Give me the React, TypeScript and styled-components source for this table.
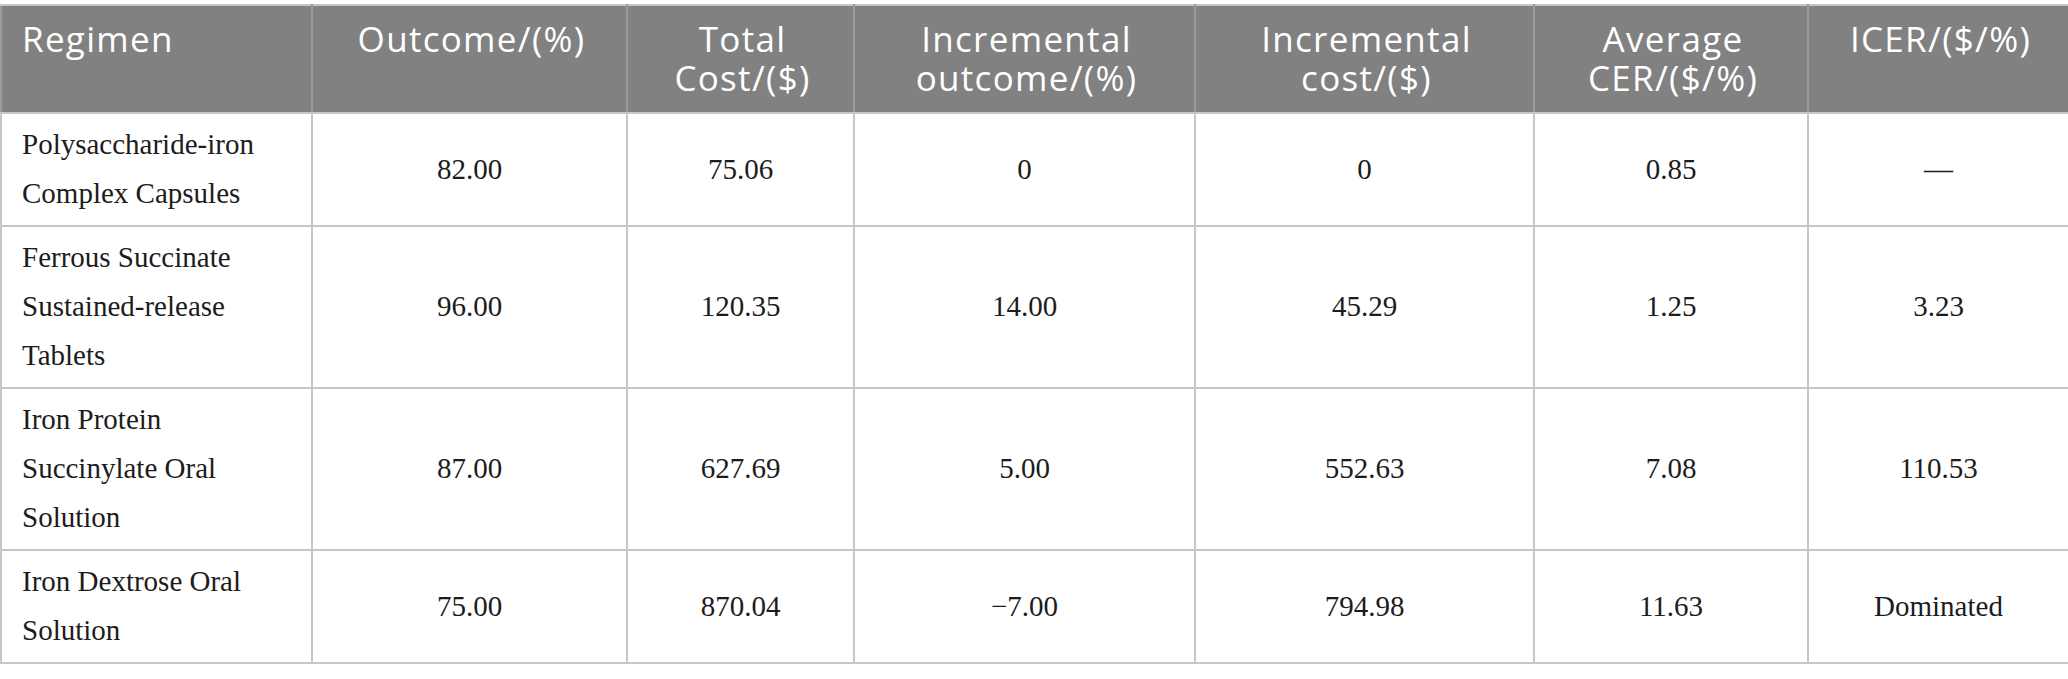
import React from "react";
import styled, { createGlobalStyle } from "styled-components";

const headerGray = "#808180";
const lineGray = "#c6c6c6";

const GlobalStyle = createGlobalStyle`
  html, body {
    margin: 0;
    padding: 0;
    background: #ffffff;
  }
`;

interface Row {
  regimen: string;
  values: string[];
}

const columns = [
  { label: "Regimen", width: 311 },
  { label: "Outcome/(%)", width: 315 },
  { label: "Total Cost/($)", width: 227 },
  { label: "Incremental outcome/(%)", width: 341 },
  { label: "Incremental cost/($)", width: 339 },
  { label: "Average CER/($/%)", width: 274 },
  { label: "ICER/($/%)", width: 261 },
];

const rows: Row[] = [
  {
    regimen: "Polysaccharide-iron Complex Capsules",
    values: ["82.00", "75.06", "0", "0", "0.85", "—"],
  },
  {
    regimen: "Ferrous Succinate Sustained-release Tablets",
    values: ["96.00", "120.35", "14.00", "45.29", "1.25", "3.23"],
  },
  {
    regimen: "Iron Protein Succinylate Oral Solution",
    values: ["87.00", "627.69", "5.00", "552.63", "7.08", "110.53"],
  },
  {
    regimen: "Iron Dextrose Oral Solution",
    values: ["75.00", "870.04", "−7.00", "794.98", "11.63", "Dominated"],
  },
];

export default function App() {
  return (
    <Page>
      <GlobalStyle />
      <Table>
        <colgroup>
          {columns.map((c) => (
            <col key={c.label} style={{ width: c.width }} />
          ))}
        </colgroup>
        <thead>
          <tr>
            {columns.map((c, i) => (
              <HeadCell key={c.label} $first={i === 0}>
                {c.label}
              </HeadCell>
            ))}
          </tr>
        </thead>
        <tbody>
          {rows.map((r) => (
            <tr key={r.regimen}>
              <BodyCell $first>{r.regimen}</BodyCell>
              {r.values.map((v, i) => (
                <BodyCell key={i}>{v}</BodyCell>
              ))}
            </tr>
          ))}
        </tbody>
      </Table>
    </Page>
  );
}

const Page = styled.div`
  padding: 4px 0 0;
  width: 2068px;
`;

const Table = styled.table`
  width: 2068px;
  table-layout: fixed;
  border-collapse: collapse;
  border: 2px solid ${lineGray};
`;

const HeadCell = styled.th<{ $first?: boolean }>`
  background: ${headerGray};
  color: #ffffff;
  font-family: "Open Sans", "DejaVu Sans", sans-serif;
  font-weight: 400;
  font-size: 35px;
  letter-spacing: 1.3px;
  line-height: 39px;
  text-align: ${(p) => (p.$first ? "left" : "center")};
  vertical-align: top;
  padding: 13px 16px 15px 20px;
  border: 2px solid #9a9b9a;
  border-top-color: ${lineGray};
  border-bottom-color: ${lineGray};
`;

const BodyCell = styled.td<{ $first?: boolean }>`
  font-family: "Liberation Serif", "Times New Roman", serif;
  font-size: 29px;
  line-height: 49px;
  color: #1c1c1c;
  text-align: ${(p) => (p.$first ? "left" : "center")};
  vertical-align: middle;
  padding: 6px ${(p) => (p.$first ? "20px" : "12px")} 7px;
  border: 2px solid ${lineGray};
`;
